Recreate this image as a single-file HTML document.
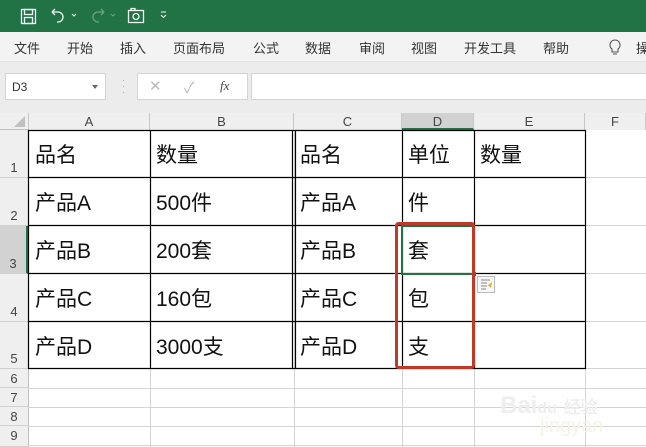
<!DOCTYPE html>
<html><head><meta charset="utf-8"><style>
*{margin:0;padding:0;box-sizing:border-box}
body{width:646px;height:447px;overflow:hidden;background:#fff;position:relative;font-family:"Liberation Sans","Noto Sans CJK SC",sans-serif}
.a{position:absolute}
.tab{position:absolute;top:38px;font-size:13px;color:#333}
.ch{position:absolute;top:113px;height:17px;font-size:13px;color:#444;text-align:center;line-height:17px;border-right:1px solid #c8c8c8;background:#efefef}
.rh{position:absolute;left:0;width:28px;font-size:13px;color:#444;text-align:center;background:#efefef;border-bottom:1px solid #d0d0d0}
.c{position:absolute;font-size:21px;color:#111;line-height:1;white-space:nowrap}
.hl{position:absolute;height:1px;background:#d4d4d4;left:28px;right:0}
.vl{position:absolute;width:1px;background:#d4d4d4;top:130px;bottom:0}
</style></head><body>
<div class="a" style="left:0;top:0;width:646px;height:32px;background:#217346"></div>
<svg class="a" style="left:0;top:0" width="180" height="32">
<g fill="none" stroke="#fff" stroke-width="1.3" opacity=".95">
<rect x="21.5" y="9.5" width="14" height="14"/><rect x="24.5" y="9.5" width="8" height="5"/><rect x="24.5" y="17.5" width="8" height="6"/>
<path d="M52 12h6a5 5 0 0 1 0 10h-1M52 12l3-3M52 12l3 3"/>
<path d="M72 14l2 2 2-2" stroke-width="1"/>
<g opacity=".35"><path d="M104 12h-6a5 5 0 0 0 0 10h1M104 12l-3-3M104 12l-3 3"/><path d="M111 14l2 2 2-2" stroke-width="1"/></g>
<rect x="128.5" y="10.5" width="15" height="12"/><circle cx="136" cy="16.5" r="3"/><path d="M131 10.5v-2h4v2"/>
<path d="M161 12h5M161 15l2.5 2.5 2.5-2.5" stroke-width="1"/>
</g></svg>
<div class="a" style="left:0;top:32px;width:646px;height:30px;background:#f3f3f3;border-bottom:1px solid #e2e2e2"></div>
<div class="tab" style="left:14px">文件</div><div class="tab" style="left:67px">开始</div><div class="tab" style="left:120px">插入</div><div class="tab" style="left:173px">页面布局</div><div class="tab" style="left:253px">公式</div><div class="tab" style="left:305px">数据</div><div class="tab" style="left:359px">审阅</div><div class="tab" style="left:411px">视图</div><div class="tab" style="left:464px">开发工具</div><div class="tab" style="left:543px">帮助</div>
<svg class="a" style="left:607px;top:38px" width="16" height="18"><path d="M8 2a5 5 0 0 0-3 9v3h6v-3a5 5 0 0 0-3-9zM6 16h4" fill="none" stroke="#555" stroke-width="1.1"/></svg>
<div class="tab" style="left:636px">操</div>
<div class="a" style="left:0;top:62px;width:646px;height:51px;background:#ececec"></div>
<div class="a" style="left:5px;top:73px;width:101px;height:27px;background:#fff;border:1px solid #d4d4d4;font-size:12px;color:#333;padding:6px 0 0 6px">D3</div>
<div class="a" style="left:92px;top:85px;width:0;height:0;border:3.5px solid transparent;border-top:4px solid #666"></div>
<div class="a" style="left:122px;top:78px;font-size:10px;color:#aaa;line-height:6px">·<br>·<br>·</div>
<div class="a" style="left:137px;top:73px;width:111px;height:27px;background:#fff;border:1px solid #d4d4d4"></div>
<div class="a" style="left:149px;top:77px;font-size:15px;color:#bbb">✕</div>
<div class="a" style="left:184px;top:77px;font-size:15px;color:#bbb">✓</div>
<div class="a" style="left:220px;top:78px;font-size:13px;color:#444;font-family:'Liberation Serif',serif;font-style:italic">fx</div>
<div class="a" style="left:251px;top:73px;width:395px;height:27px;background:#fff;border:1px solid #d4d4d4;border-right:none"></div>
<div class="a" style="left:0;top:113px;width:646px;height:17px;background:#efefef;border-bottom:1px solid #bfbfbf"></div>
<div class="a" style="left:14px;top:116px;width:0;height:0;border-left:11px solid transparent;border-bottom:11px solid #c0c0c0"></div>
<div class="ch" style="left:28px;width:122px;border-left:1px solid #c8c8c8">A</div>
<div class="ch" style="left:150px;width:144px">B</div>
<div class="ch" style="left:294px;width:108px">C</div>
<div class="ch" style="left:402px;width:72px;background:#d2d2d2;border-bottom:2px solid #217346;height:17px">D</div>
<div class="ch" style="left:474px;width:111px">E</div>
<div class="ch" style="left:585px;width:61px">F</div>
<div class="rh" style="top:130px;height:48px;line-height:76px">1</div>
<div class="rh" style="top:178px;height:48px;line-height:76px">2</div>
<div class="rh" style="top:226px;height:48px;line-height:76px;background:#d2d2d2;border-right:2px solid #217346">3</div>
<div class="rh" style="top:274px;height:48px;line-height:76px">4</div>
<div class="rh" style="top:322px;height:47px;line-height:74px">5</div>
<div class="rh" style="top:369px;height:19px;line-height:20px">6</div>
<div class="rh" style="top:388px;height:19px;line-height:20px">7</div>
<div class="rh" style="top:407px;height:19px;line-height:20px">8</div>
<div class="rh" style="top:426px;height:21px;line-height:20px">9</div>
<div class="a" style="left:28px;top:130px;width:1px;height:317px;background:#bfbfbf"></div>
<div class="hl" style="top:388px"></div><div class="hl" style="top:407px"></div><div class="hl" style="top:426px"></div><div class="hl" style="top:445px"></div>
<div class="vl" style="left:150px"></div><div class="vl" style="left:294px"></div><div class="vl" style="left:402px"></div><div class="vl" style="left:474px"></div><div class="vl" style="left:585px"></div>
<div class="a" style="left:585px;top:130px;width:61px;height:239px;background:linear-gradient(#d4d4d4,#d4d4d4) 0 47px/100% 1px no-repeat,linear-gradient(#d4d4d4,#d4d4d4) 0 95px/100% 1px no-repeat,linear-gradient(#d4d4d4,#d4d4d4) 0 143px/100% 1px no-repeat,linear-gradient(#d4d4d4,#d4d4d4) 0 191px/100% 1px no-repeat,linear-gradient(#d4d4d4,#d4d4d4) 0 238px/100% 1px no-repeat"></div>
<svg class="a" style="left:0;top:0" width="646" height="447">
<g stroke="#000" stroke-width="1.2" fill="none">
<path d="M28.5 130v239M150.5 130v239M292.5 130v239M295.5 130v239M402.5 130v239M474.5 130v239M585.5 130v239"/>
<path d="M28 130.5h558M28 177.5h558M28 225.5h558M28 273.5h558M28 321.5h558M28 368.5h558"/>
</g>
<rect x="402" y="226" width="72" height="48" fill="none" stroke="#217346" stroke-width="2"/>
<rect x="472" y="272" width="4" height="4" fill="#217346"/>
<rect x="396.5" y="223.5" width="77" height="144" rx="2" fill="none" stroke="#c0392b" stroke-width="3"/>
<rect x="477.5" y="276.5" width="17" height="16" fill="#f7f7f7" stroke="#bbb"/>
<path d="M481 280h9M481 283h6M481 286h6M481 289h5" stroke="#888"/>
<path d="M488 285l4-3-1 6z" fill="#e0b030"/>
</svg>
<div class="c" style="left:35px;top:145px">品名</div><div class="c" style="left:156px;top:145px">数量</div><div class="c" style="left:300px;top:145px">品名</div><div class="c" style="left:408px;top:145px">单位</div><div class="c" style="left:480px;top:145px">数量</div>
<div class="c" style="left:35px;top:193px">产品A</div><div class="c" style="left:156px;top:193px">500件</div><div class="c" style="left:300px;top:193px">产品A</div><div class="c" style="left:408px;top:193px">件</div>
<div class="c" style="left:35px;top:241px">产品B</div><div class="c" style="left:156px;top:241px">200套</div><div class="c" style="left:300px;top:241px">产品B</div><div class="c" style="left:408px;top:241px">套</div>
<div class="c" style="left:35px;top:289px">产品C</div><div class="c" style="left:156px;top:289px">160包</div><div class="c" style="left:300px;top:289px">产品C</div><div class="c" style="left:408px;top:289px">包</div>
<div class="c" style="left:35px;top:337px">产品D</div><div class="c" style="left:156px;top:337px">3000支</div><div class="c" style="left:300px;top:337px">产品D</div><div class="c" style="left:408px;top:337px">支</div>
<div class="a" style="left:500px;top:392px;font-size:24px;color:#eeeeee;font-weight:bold">Bai<span style="font-size:16px">du</span> <span style="font-size:17px">经验</span></div>
<div class="a" style="left:540px;top:415px;font-size:20px;color:#f8f2e4">jingyan</div>
</body></html>
